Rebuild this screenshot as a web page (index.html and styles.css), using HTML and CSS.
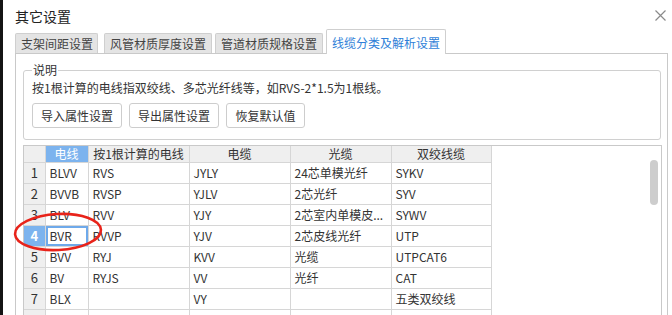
FILE: index.html
```html
<!DOCTYPE html>
<html lang="zh">
<head>
  <meta charset="UTF-8">
  <title>其它设置</title>
<link rel="stylesheet" href="styles.css">
</head>
<body>
<div class="window">
  <div class="top">
    <p class="title">其它设置</p>
    <svg class="close" width="11" height="11" viewBox="0 0 11 11"><path d="M0.5 0.5 L10.5 10.5 M10.5 0.5 L0.5 10.5" stroke="#8a8a8a" stroke-width="1.2" fill="none"/></svg>
  </div>
  <div class="tabs">
    <div class="tab">支架间距设置</div>
    <div class="tab">风管材质厚度设置</div>
    <div class="tab">管道材质规格设置</div>
    <div class="tab active">线缆分类及解析设置</div>
  </div>
  <div class="panel">
    <fieldset class="note">
      <legend>说明</legend>
      <p class="note-text">按1根计算的电线指双绞线、多芯光纤线等，如RVS-2*1.5为1根线。</p>
      <div class="btns">
        <button class="btn">导入属性设置</button>
        <button class="btn">导出属性设置</button>
        <button class="btn">恢复默认值</button>
      </div>
    </fieldset>
    <div class="grid-wrap">
      <table class="grid">
        <tr>
          <th class="rh"></th><th class="c1 sel-head">电线</th><th class="c2">按1根计算的电线</th><th class="c3">电缆</th><th class="c4">光缆</th><th class="c5">双绞线缆</th>
        </tr>
        <tr><td class="rh">1</td><td>BLVV</td><td>RVS</td><td>JYLY</td><td>24芯单模光纤</td><td>SYKV</td></tr>
        <tr><td class="rh">2</td><td>BVVB</td><td>RVSP</td><td>YJLV</td><td>2芯光纤</td><td>SYV</td></tr>
        <tr><td class="rh">3</td><td>BLV</td><td>RVV</td><td>YJY</td><td>2芯室内单模皮...</td><td>SYWV</td></tr>
        <tr><td class="rh sel-row">4</td><td class="cur">BVR</td><td>RVVP</td><td>YJV</td><td>2芯皮线光纤</td><td>UTP</td></tr>
        <tr><td class="rh">5</td><td>BVV</td><td>RYJ</td><td>KVV</td><td>光缆</td><td>UTPCAT6</td></tr>
        <tr><td class="rh">6</td><td>BV</td><td>RYJS</td><td>VV</td><td>光纤</td><td>CAT</td></tr>
        <tr><td class="rh">7</td><td>BLX</td><td></td><td>VY</td><td></td><td>五类双绞线</td></tr>
        <tr><td class="rh"></td><td></td><td></td><td></td><td></td><td></td></tr>
      </table>
      <div class="scroll"><div class="thumb"></div></div>
      <svg class="mark" width="94" height="44" viewBox="0 0 94 44"><ellipse cx="47" cy="21" rx="43" ry="18" transform="rotate(-3 47 21)" stroke="#e8231a" stroke-width="2.6" fill="none"/></svg>
    </div>
  </div>
</div>
</body>
</html>
```

FILE: styles.css
```css
* {
  box-sizing: border-box;
}

body {
  margin: 0;
  background: #ffffff;
  font-family: "Noto Sans CJK SC", "Noto Sans", sans-serif;
  font-size: 12px;
  color: #333;
  overflow: hidden;
}

.window {
  height: 315px;
  border-left: 3px solid #141414;
  padding: 0 4px 0 12px;
}

.top {
  display: flex;
  justify-content: space-between;
  align-items: center;
  height: 28px;
  padding-top: 3px;
}

.title {
  margin: 0;
  font-size: 14px;
  color: #222;
}

.close {
  margin-right: 2px;
}

.tabs {
  display: flex;
  align-items: flex-end;
  height: 25px;
  gap: 3px;
}

.tab {
  height: 20px;
  line-height: 19px;
  padding: 0 5px;
  background: #e4e4e4;
  border: 1px solid #cfcfcf;
  border-bottom: none;
  border-radius: 2px 2px 0 0;
  color: #444;
}

.tab:first-child {
  padding: 0 4px 0 5px;
}

.tab:nth-child(2) {
  margin-left: 3px;
}

.tab.active {
  height: 25px;
  line-height: 25px;
  background: #fff;
  color: #2f7fd8;
  margin-bottom: -1px;
  position: relative;
  z-index: 2;
  padding: 0 5px 0 5px;
}

.panel {
  border: 1px solid #c9c9c9;
  height: 270px;
  padding: 9px 6px 0 7px;
}

.note {
  margin: 0 0 5px 0;
  border: 1px solid #d0d0d0;
  border-radius: 3px;
  padding: 0 8px 9px 8px;
  height: 77px;
  width: 638px;
}

.note legend {
  padding: 0 1px;
  line-height: 14px;
  color: #333;
}

.note-text {
  margin: 3px 0 7px 0;
  line-height: 16px;
  color: #333;
}

.btns {
  display: flex;
  gap: 7px;
}

.btn {
  font-family: inherit;
  font-size: 12px;
  color: #333;
  background: #fff;
  border: 1px solid #cdcdcd;
  border-radius: 3px;
  height: 25px;
  padding: 0 8px;
  width: 90px;
}

.btn:last-child {
  width: 79px;
}

.grid-wrap {
  position: relative;
  display: flex;
  border: 1px solid #c9c9c9;
  border-bottom: none;
  width: 639px;
  height: 170px;
}

.grid {
  border-collapse: collapse;
  table-layout: fixed;
  width: 467px;
}

.grid th, .grid td {
  border: 1px solid #d6d6d6;
  padding: 0 4px;
  white-space: nowrap;
  overflow: hidden;
  text-align: left;
  font-weight: normal;
  color: #333;
}

.grid tr:first-child th {
  border-top: none;
}

.grid th:first-child, .grid td:first-child {
  border-left: none;
}

.grid th {
  height: 16px;
  line-height: 15px;
  background: #efefef;
  text-align: center;
}

.grid td {
  height: 21px;
  line-height: 19px;
  background: #fff;
}

.grid .rh {
  width: 21px;
  background: #efefef;
  text-align: center;
  padding: 0;
  font-size: 13px;
}

.c1 { width: 43px; }
.c2 { width: 101px; }
.c3 { width: 101px; }
.c4 { width: 101px; }
.c5 { width: 100px; }

.grid th.sel-head {
  background: #7cb3ee;
  color: #fff;
}

.grid td.sel-row {
  background: #7cb3ee;
  color: #fff;
  font-weight: bold;
}

.grid td.cur {
  box-shadow: inset 0 0 0 2px #6ea9ea;
}

.scroll {
  flex: 1;
  position: relative;
}

.thumb {
  position: absolute;
  right: 3px;
  top: 14px;
  width: 8px;
  height: 45px;
  border-radius: 4px;
  background: #cdcdcd;
}

.mark {
  position: absolute;
  left: -13px;
  top: 65px;
}
```
